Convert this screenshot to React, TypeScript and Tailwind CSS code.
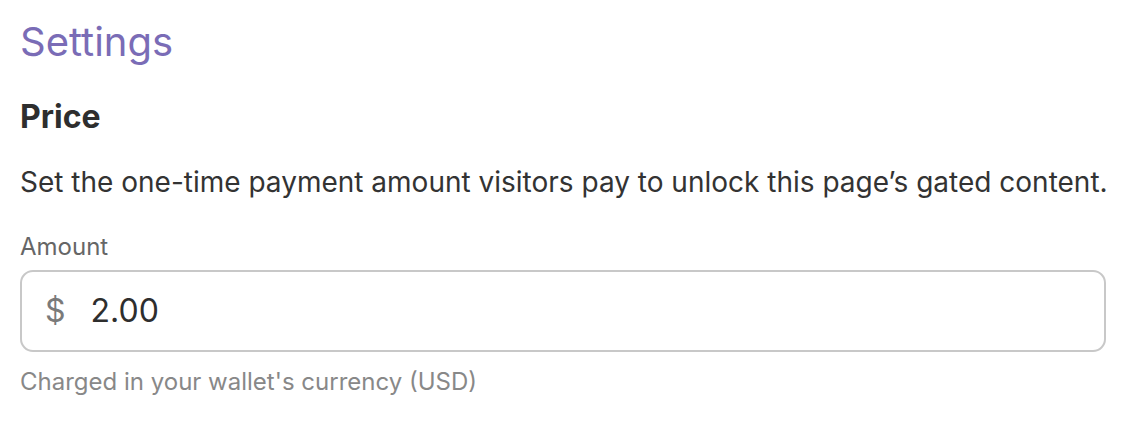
export default function App() {
  return (
    <div
      className="bg-white w-[1124px] h-[422px] pl-5 pr-[18px] pt-[18px]"
      style={{ fontFamily: 'Inter, "Noto Sans", sans-serif' }}
    >
      <h1 className="text-[40px] leading-[48px] text-[#7a6cb6] font-normal">Settings</h1>

      <h2 className="mt-[31px] text-[32px] leading-[40px] font-bold text-[#2e2e2e]">Price</h2>

      <p className="mt-[27px] text-[28px] leading-[36px] text-[#333333] whitespace-nowrap">
        Set the one-time payment amount visitors pay to unlock this page’s gated content.
      </p>

      <label className="block mt-[31px] text-[24px] leading-[32px] text-[#666666]">Amount</label>

      <div className="mt-[7px] flex items-center h-[82px] rounded-[13px] border-2 border-[#c8c8c8] px-[23px]">
        <span className="text-[32px] leading-[40px] text-[#7a7a7a]">$</span>
        <span className="ml-[25px] text-[32px] leading-[40px] text-[#2e2e2e]">2.00</span>
      </div>

      <p className="mt-[14px] text-[24px] leading-[32px] text-[#888888]">
        Charged in your wallet's currency (USD)
      </p>
    </div>
  );
}
